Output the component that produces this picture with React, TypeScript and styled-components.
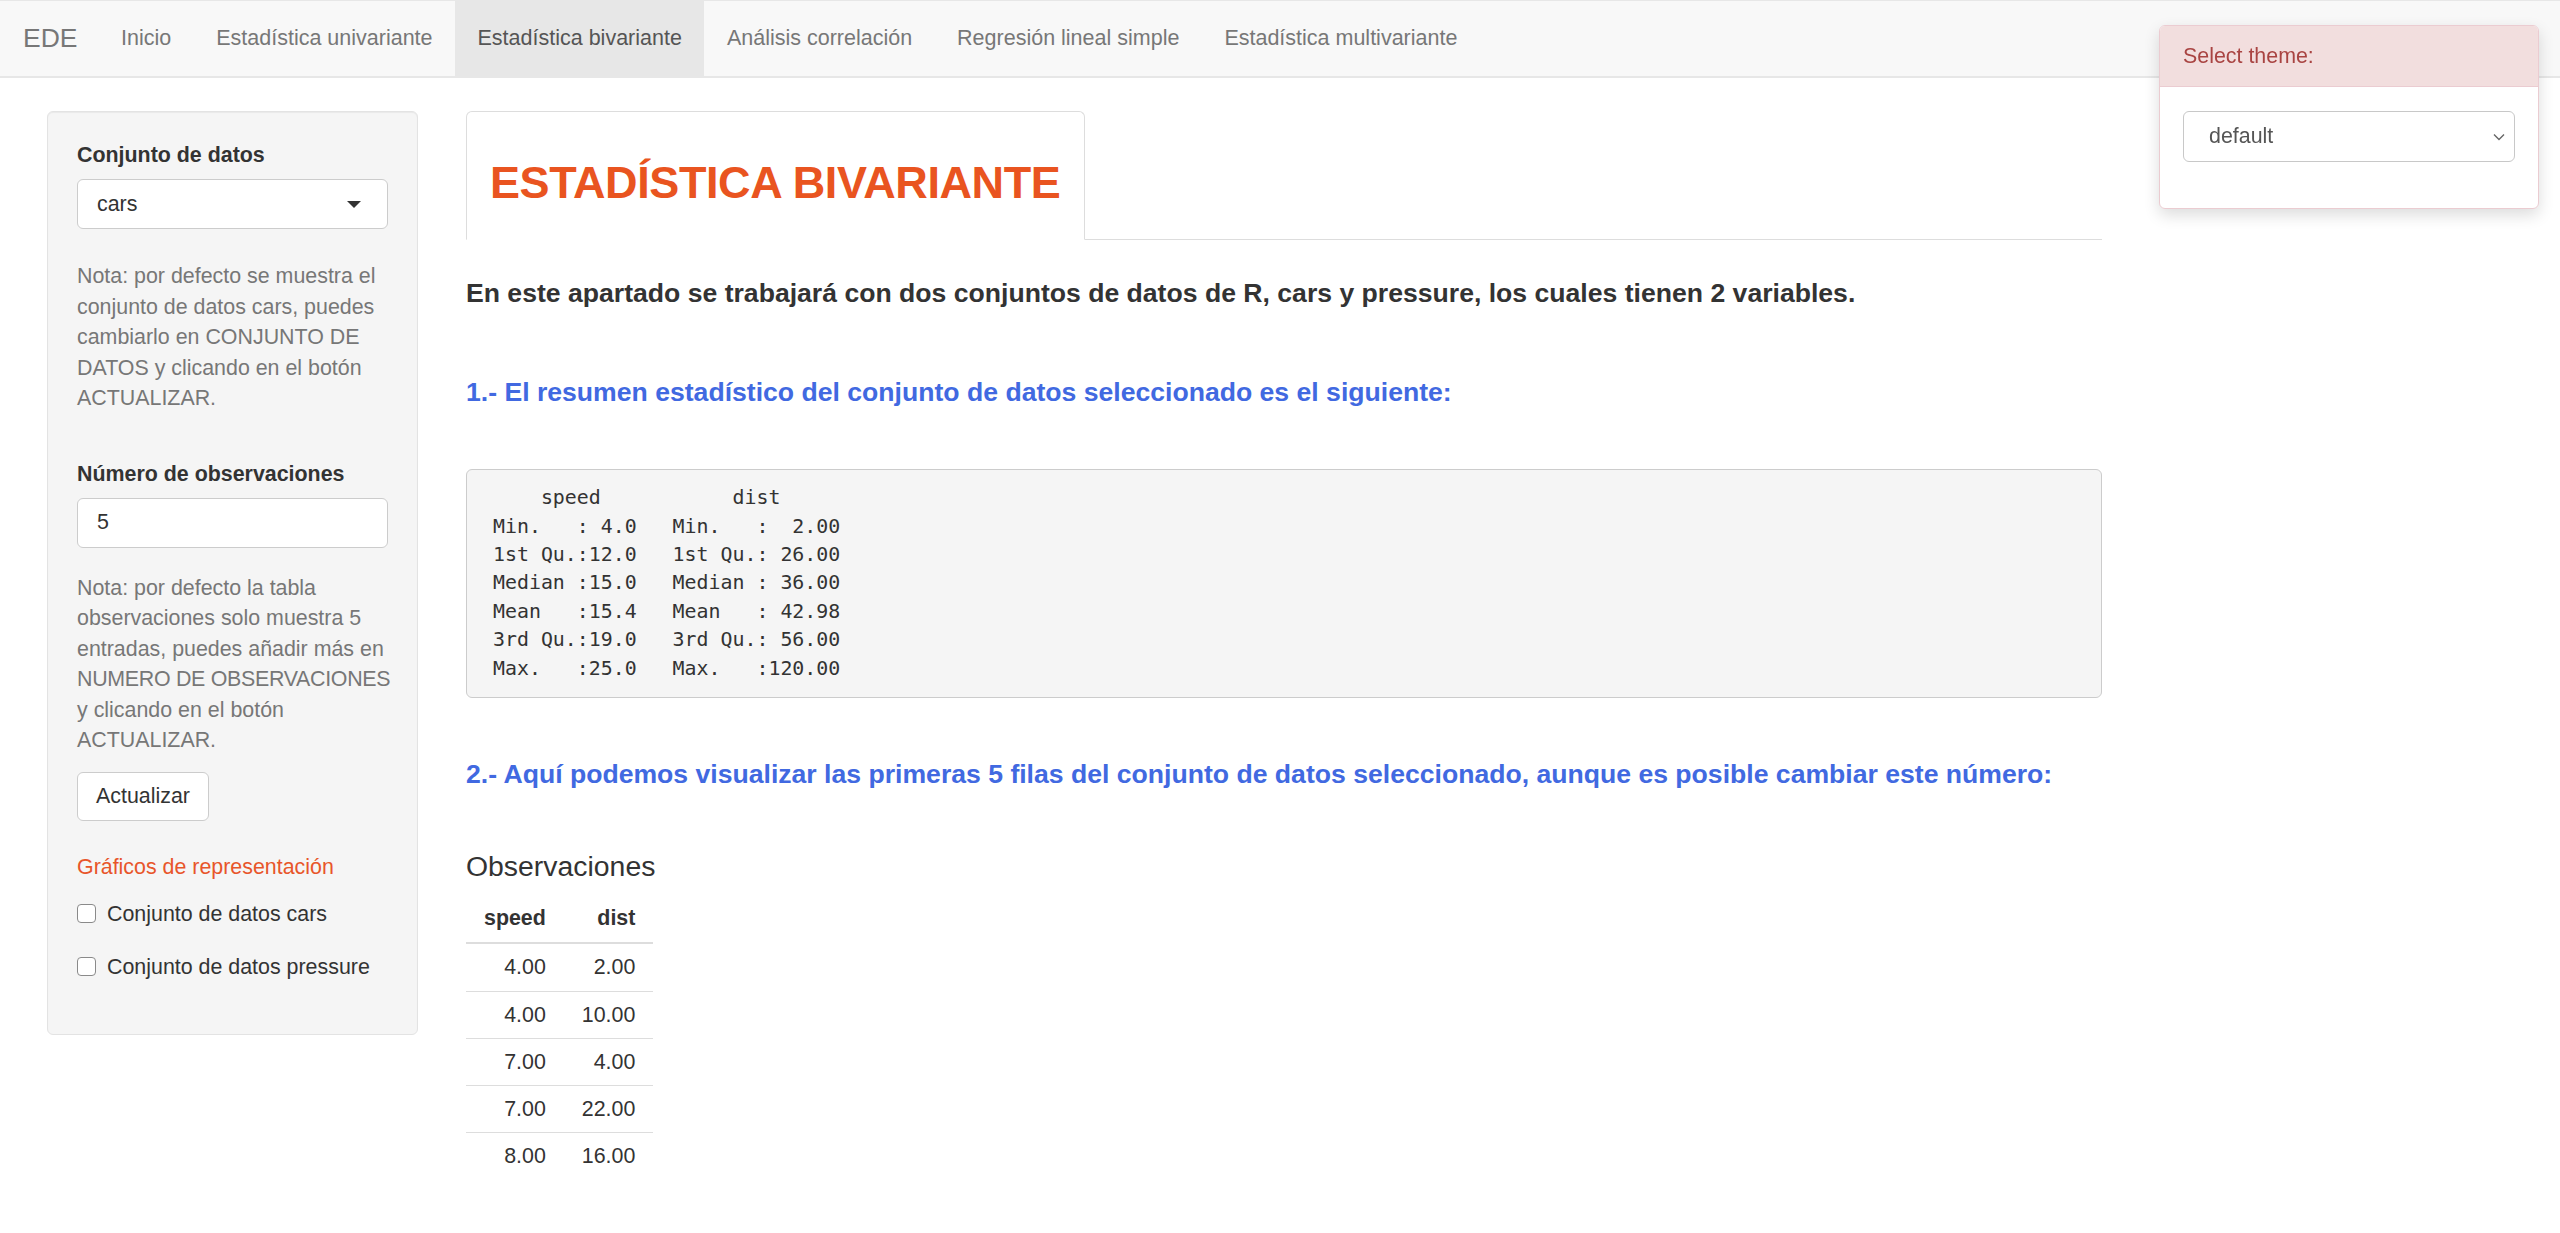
import styled, { createGlobalStyle } from 'styled-components'

const GlobalStyle = createGlobalStyle`
  * { box-sizing: border-box; }
  html, body {
    margin: 0;
    padding: 0;
    background: #fff;
  }
  body {
    font-family: "Liberation Sans", Arial, sans-serif;
    font-size: 21.4px;
    line-height: 1.42857;
    color: #333;
    overflow: hidden;
  }
`

const NAV_ITEMS = [
  'Inicio',
  'Estadística univariante',
  'Estadística bivariante',
  'Análisis correlación',
  'Regresión lineal simple',
  'Estadística multivariante',
]
const ACTIVE_TAB = 'Estadística bivariante'

const SUMMARY = `     speed           dist       
 Min.   : 4.0   Min.   :  2.00  
 1st Qu.:12.0   1st Qu.: 26.00  
 Median :15.0   Median : 36.00  
 Mean   :15.4   Mean   : 42.98  
 3rd Qu.:19.0   3rd Qu.: 56.00  
 Max.   :25.0   Max.   :120.00  `

const OBSERVATIONS = [
  { speed: 4, dist: 2 },
  { speed: 4, dist: 10 },
  { speed: 7, dist: 4 },
  { speed: 7, dist: 22 },
  { speed: 8, dist: 16 },
]

/* ---------- navbar ---------- */

const Navbar = styled.nav`
  display: flex;
  align-items: stretch;
  height: 78px;
  background: #f8f8f8;
  border-top: 1px solid #e7e7e7;
  border-bottom: 2px solid #e7e7e7;
`

const Brand = styled.span`
  display: flex;
  align-items: center;
  padding: 0 21px 0 23px;
  font-size: 26.5px;
  color: #777;
`

const NavLink = styled.a<{ $active?: boolean }>`
  display: flex;
  align-items: center;
  padding: 0 22.5px;
  font-size: 21.5px;
  text-decoration: none;
  color: ${(p) => (p.$active ? '#555' : '#777')};
  background: ${(p) => (p.$active ? '#e7e7e7' : 'transparent')};
`

/* ---------- theme picker ---------- */

const ThemePanel = styled.div`
  position: fixed;
  top: 25px;
  right: 21px;
  width: 380px;
  background: #fff;
  border: 1px solid #ebccd1;
  border-radius: 6px;
  box-shadow: 0 6px 16px rgba(0, 0, 0, 0.14);
  overflow: hidden;
`

const ThemeHeading = styled.div`
  padding: 15px 23px;
  line-height: 30px;
  background: #f2dede;
  color: #a94442;
  border-bottom: 1px solid #ebccd1;
`

const ThemeBody = styled.div`
  padding: 24px 23px 46px;
`

const NativeSelect = styled.div`
  display: flex;
  align-items: center;
  justify-content: space-between;
  height: 51px;
  padding: 0 9px 0 25px;
  border: 1px solid #c8c8c8;
  border-radius: 6px;
  color: #555;
  background: #fff;
`

/* ---------- page layout ---------- */

const Layout = styled.div`
  display: grid;
  grid-template-columns: 371px 1636px;
  column-gap: 48px;
  align-items: start;
  padding: 33px 0 0 47px;
`

const Well = styled.aside`
  display: flex;
  flex-direction: column;
  align-items: flex-start;
  padding: 28px 29px 52px;
  background: #f5f5f5;
  border: 1px solid #e3e3e3;
  border-radius: 6px;
  box-shadow: inset 0 1px 1px rgba(0, 0, 0, 0.05);
`

const FieldLabel = styled.label<{ $top?: number }>`
  display: block;
  margin-top: ${(p) => p.$top ?? 0}px;
  margin-bottom: 9px;
  font-weight: 700;
  line-height: 30px;
`

const Control = styled.div`
  display: flex;
  align-items: center;
  justify-content: space-between;
  width: 100%;
  height: 50px;
  padding: 0 26px 0 19px;
  background: #fff;
  border: 1px solid #ccc;
  border-radius: 6px;
  color: #333;
`

const Caret = styled.span`
  width: 0;
  height: 0;
  border-left: 7px solid transparent;
  border-right: 7px solid transparent;
  border-top: 7px solid #333;
`

const HelpText = styled.p<{ $top: number }>`
  margin: ${(p) => p.$top}px 0 0;
  color: #777;
  line-height: 30.5px;
  white-space: nowrap;
`

// upper-case runs set a touch tighter so the long line stays in the well
const Caps = styled.span`
  letter-spacing: -0.3px;
`

const Button = styled.button`
  margin-top: 16px;
  height: 49px;
  padding: 0 18px;
  font: inherit;
  color: #333;
  background: #fff;
  border: 1px solid #ccc;
  border-radius: 6px;
`

const GroupTitle = styled.div`
  margin-top: 31px;
  line-height: 30px;
  color: #e8552a;
`

const CheckRow = styled.label<{ $top: number }>`
  display: flex;
  align-items: center;
  gap: 11px;
  margin-top: ${(p) => p.$top}px;
  line-height: 30px;
`

const CheckBox = styled.span`
  width: 19px;
  height: 19px;
  background: #fff;
  border: 1.5px solid #8a8a8a;
  border-radius: 4px;
`

/* ---------- main panel ---------- */

const Main = styled.main`
  display: flex;
  flex-direction: column;
  align-items: flex-start;
`

const TabStrip = styled.div`
  display: flex;
  width: 100%;
  border-bottom: 1px solid #ddd;
`

const Tab = styled.div`
  margin-bottom: -1px;
  padding: 16px 24px 16px 23px;
  background: #fff;
  border: 1px solid #ddd;
  border-bottom-color: transparent;
  border-radius: 6px 6px 0 0;
`

const PageTitle = styled.h2`
  margin: 30px 0 15px;
  font-size: 45px;
  line-height: 49.5px;
  font-weight: 700;
  letter-spacing: -0.4px;
  color: #e95420;
`

const Lead = styled.h4<{ $top: number; $tone?: 'blue' }>`
  margin: ${(p) => p.$top}px 0 0;
  font-size: 26.6px;
  line-height: 29.3px;
  font-weight: 700;
  color: ${(p) => (p.$tone === 'blue' ? '#4169e1' : '#333')};
`

const Output = styled.pre`
  width: 100%;
  margin: 62px 0 0;
  padding: 14px;
  font-family: "DejaVu Sans Mono", "Liberation Mono", monospace;
  font-size: 19.9px;
  line-height: 28.4px;
  color: #333;
  background: #f5f5f5;
  border: 1px solid #ccc;
  border-radius: 6px;
`

const TableTitle = styled.h4`
  margin: 62px 0 14px;
  font-size: 28.4px;
  line-height: 31px;
  font-weight: 400;
  color: #333;
`

const Table = styled.table`
  border-collapse: collapse;

  th,
  td {
    padding: 8px 18px;
    line-height: 30.2px;
    text-align: right;
  }

  th {
    padding-top: 7px;
    padding-bottom: 9px;
    font-weight: 700;
    border-bottom: 2px solid #ddd;
  }

  tbody tr + tr td {
    border-top: 1px solid #ddd;
  }
`

export default function App() {
  return (
    <>
      <GlobalStyle />
      <Navbar>
        <Brand>EDE</Brand>
        {NAV_ITEMS.map((item) => (
          <NavLink key={item} $active={item === ACTIVE_TAB}>
            {item}
          </NavLink>
        ))}
      </Navbar>

      <Layout>
        <Well>
          <FieldLabel>Conjunto de datos</FieldLabel>
          <Control>
            <span>cars</span>
            <Caret />
          </Control>
          <HelpText $top={32}>
            Nota: por defecto se muestra el
            <br />
            conjunto de datos cars, puedes
            <br />
            cambiarlo en CONJUNTO DE
            <br />
            DATOS y clicando en el botón
            <br />
            ACTUALIZAR.
          </HelpText>

          <FieldLabel $top={45}>Número de observaciones</FieldLabel>
          <Control>
            <span>5</span>
          </Control>
          <HelpText $top={25}>
            Nota: por defecto la tabla
            <br />
            observaciones solo muestra 5
            <br />
            entradas, puedes añadir más en
            <br />
            <Caps>NUMERO DE OBSERVACIONES</Caps>
            <br />
            y clicando en el botón
            <br />
            ACTUALIZAR.
          </HelpText>
          <Button>Actualizar</Button>

          <GroupTitle>Gráficos de representación</GroupTitle>
          <CheckRow $top={17}>
            <CheckBox />
            Conjunto de datos cars
          </CheckRow>
          <CheckRow $top={23}>
            <CheckBox />
            Conjunto de datos pressure
          </CheckRow>
        </Well>

        <Main>
          <TabStrip>
            <Tab>
              <PageTitle>ESTADÍSTICA BIVARIANTE</PageTitle>
            </Tab>
          </TabStrip>

          <Lead $top={39}>
            En este apartado se trabajará con dos conjuntos de datos de R, cars y pressure, los cuales tienen 2 variables.
          </Lead>
          <Lead $top={70} $tone="blue">
            1.- El resumen estadístico del conjunto de datos seleccionado es el siguiente:
          </Lead>

          <Output>{SUMMARY}</Output>

          <Lead $top={62} $tone="blue">
            2.- Aquí podemos visualizar las primeras 5 filas del conjunto de datos seleccionado, aunque es posible cambiar este número:
          </Lead>

          <TableTitle>Observaciones</TableTitle>
          <Table>
            <thead>
              <tr>
                <th>speed</th>
                <th>dist</th>
              </tr>
            </thead>
            <tbody>
              {OBSERVATIONS.map((row, i) => (
                <tr key={i}>
                  <td>{row.speed.toFixed(2)}</td>
                  <td>{row.dist.toFixed(2)}</td>
                </tr>
              ))}
            </tbody>
          </Table>
        </Main>
      </Layout>

      <ThemePanel>
        <ThemeHeading>Select theme:</ThemeHeading>
        <ThemeBody>
          <NativeSelect>
            <span>default</span>
            <svg width="12" height="8" viewBox="0 0 12 8">
              <path d="M1 1.5 L6 6.5 L11 1.5" fill="none" stroke="#666" strokeWidth="1.4" />
            </svg>
          </NativeSelect>
        </ThemeBody>
      </ThemePanel>
    </>
  )
}
